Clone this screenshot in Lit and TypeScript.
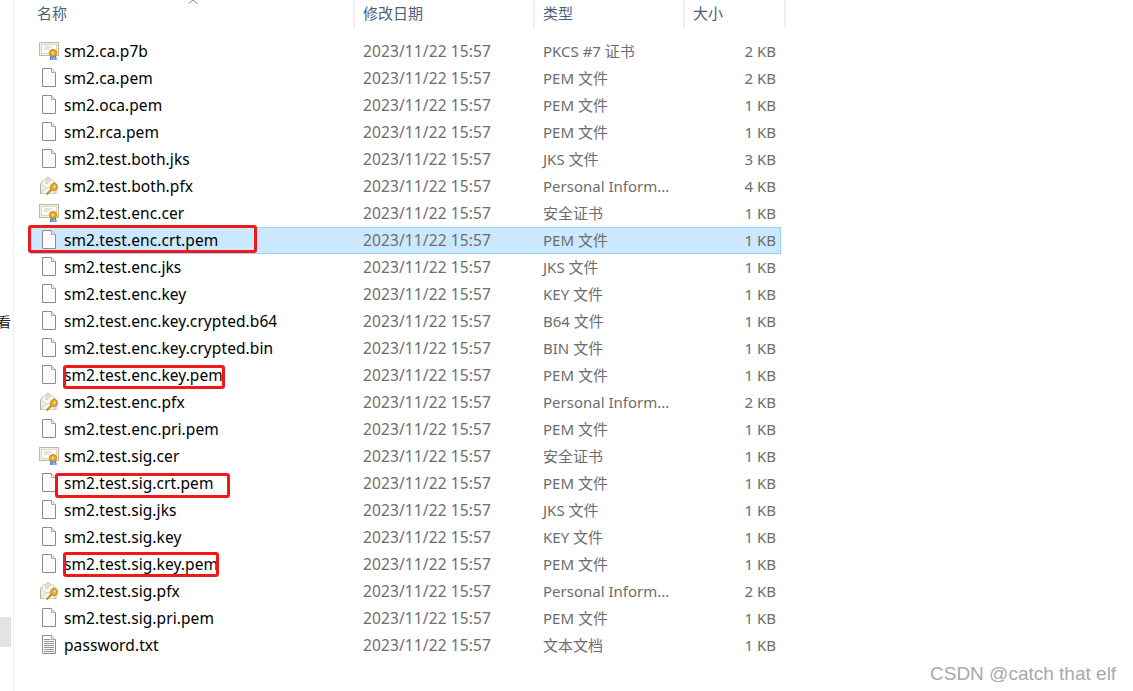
import { LitElement, html, css, svg } from "lit";
import { customElement } from "lit/decorators.js";

type Kind = "cert" | "doc" | "pfx" | "txt";
interface Row { n: string; t: string; s: string; k: Kind; sel?: boolean }

const PEM = "PEM 文件", JKS = "JKS 文件", KEY = "KEY 文件", PI = "Personal Inform...", SEC = "安全证书";
const rows: Row[] = [
  { n: "sm2.ca.p7b", t: "PKCS #7 证书", s: "2 KB", k: "cert" },
  { n: "sm2.ca.pem", t: PEM, s: "2 KB", k: "doc" },
  { n: "sm2.oca.pem", t: PEM, s: "1 KB", k: "doc" },
  { n: "sm2.rca.pem", t: PEM, s: "1 KB", k: "doc" },
  { n: "sm2.test.both.jks", t: JKS, s: "3 KB", k: "doc" },
  { n: "sm2.test.both.pfx", t: PI, s: "4 KB", k: "pfx" },
  { n: "sm2.test.enc.cer", t: SEC, s: "1 KB", k: "cert" },
  { n: "sm2.test.enc.crt.pem", t: PEM, s: "1 KB", k: "doc", sel: true },
  { n: "sm2.test.enc.jks", t: JKS, s: "1 KB", k: "doc" },
  { n: "sm2.test.enc.key", t: KEY, s: "1 KB", k: "doc" },
  { n: "sm2.test.enc.key.crypted.b64", t: "B64 文件", s: "1 KB", k: "doc" },
  { n: "sm2.test.enc.key.crypted.bin", t: "BIN 文件", s: "1 KB", k: "doc" },
  { n: "sm2.test.enc.key.pem", t: PEM, s: "1 KB", k: "doc" },
  { n: "sm2.test.enc.pfx", t: PI, s: "2 KB", k: "pfx" },
  { n: "sm2.test.enc.pri.pem", t: PEM, s: "1 KB", k: "doc" },
  { n: "sm2.test.sig.cer", t: SEC, s: "1 KB", k: "cert" },
  { n: "sm2.test.sig.crt.pem", t: PEM, s: "1 KB", k: "doc" },
  { n: "sm2.test.sig.jks", t: JKS, s: "1 KB", k: "doc" },
  { n: "sm2.test.sig.key", t: KEY, s: "1 KB", k: "doc" },
  { n: "sm2.test.sig.key.pem", t: PEM, s: "1 KB", k: "doc" },
  { n: "sm2.test.sig.pfx", t: PI, s: "2 KB", k: "pfx" },
  { n: "sm2.test.sig.pri.pem", t: PEM, s: "1 KB", k: "doc" },
  { n: "password.txt", t: "文本文档", s: "1 KB", k: "txt" },
];

const marks = [
  { x: 28, y: 224.5, w: 229, h: 28 },
  { x: 63, y: 364.5, w: 162, h: 24 },
  { x: 54.5, y: 472.5, w: 175, h: 25 },
  { x: 63, y: 551.5, w: 156, h: 25 },
];

const docShape = svg`<path d="M4.5 .5H13.5L17.5 4.5V18.5H4.5Z" fill="#fbfbfc" stroke="#8c8c8c"/><path d="M13.5 .5V4.5H17.5" fill="#e9ebee" stroke="#a8a8a8"/>`;

function icon(k: Kind) {
  let body;
  if (k === "doc") body = docShape;
  else if (k === "txt")
    body = svg`${docShape}<path d="M6 4.5H12.5M6 6.5H16M6 8.5H16M6 10.5H16M6 12.5H16M6 14.5H16M6 16.5H16" stroke="#8e9297" stroke-width="1"/>`;
  else if (k === "cert")
    body = svg`<rect x="1.5" y="1.5" width="19" height="13" fill="#f6f1e6" stroke="#c2b8a2"/>
      <rect x="3.5" y="3.5" width="15" height="9" fill="#fdfcf8" stroke="#ded6c4"/>
      <path d="M6 6H14M5.5 8H11" stroke="#d2cbbb"/>
      <path d="M13 14.5L12.5 19M14.2 15V19M16 15V19M17.5 14.5L18 19" stroke="#3d78d8" stroke-width="1.2"/>
      <circle cx="15" cy="12" r="3.6" fill="#eaa520" stroke="#c07e10" stroke-width=".8"/>
      <circle cx="15" cy="12" r="1.4" fill="#f7d774"/>`;
  else
    body = svg`<path d="M2.5 7.5L10 1.5L18 7.5V17.5H2.5Z" fill="#f1eee8" stroke="#b7b1a6"/>
      <path d="M4.5 9V4H15.5V9L10 12.5Z" fill="#fdfcf7" stroke="#d6d0c2" stroke-width=".8"/>
      <path d="M7 6L12 5M7 8L11 7" stroke="#d9b87a" stroke-width=".8"/>
      <path d="M2.5 17.5L9 11.5H11L18 17.5" fill="#f8f6f1" stroke="#c8c3b8" stroke-width=".8"/>
      <path d="M8.5 18.5L13.5 13.5" stroke="#c98f1e" stroke-width="2"/>
      <circle cx="16" cy="11" r="3.6" fill="#e6ac3a" stroke="#b9821c" stroke-width=".8"/>
      <circle cx="16.6" cy="10.4" r="1" fill="#fbeab8"/>`;
  return html`<svg class="ico" width="22" height="20" viewBox="0 0 22 20" aria-hidden="true">${body}</svg>`;
}

@customElement("app-root")
export class AppRoot extends LitElement {
  static styles = css`
    :host {
      display: block;
      position: relative;
      width: 1133px;
      height: 691px;
      overflow: hidden;
      background: #fff;
      font-family: "Noto Sans", "Noto Sans CJK SC", sans-serif;
      font-size: 15px;
    }
    .page { display: flex; height: 691px; }
    .side {
      width: 13px;
      flex: none;
      border-right: 1px solid #f0f0f0;
      display: flex;
      flex-direction: column;
      overflow: hidden;
    }
    .clip {
      margin-top: 313px;
      margin-left: -3px;
      height: 18px;
      line-height: 18px;
      font-size: 14px;
      color: #222;
    }
    .thumb { margin-top: 286px; width: 11px; height: 30px; background: #e3e3e3; }
    .list { margin-left: 16px; width: 751px; }
    .head, .row {
      display: grid;
      grid-template-columns: 325px 180px 150px 96px;
    }
    .head { height: 28px; margin-bottom: 10px; }
    .hc {
      box-sizing: border-box;
      padding-left: 8px;
      height: 28px;
      line-height: 26px;
      font-size: 15px;
      color: #4c607a;
      border-right: 2px solid #eeeeee;
    }
    .hc.first { padding-left: 7px; }
    .hc.last { margin-right: -5px; }
    .row { height: 27px; line-height: 27px; box-sizing: border-box; color: #6d6d6d; }
    .row.sel { background: #cce8ff; outline: 1px solid #99d1ff; outline-offset: -1px; }
    .name {
      display: flex;
      align-items: center;
      color: #000;
      padding-left: 8px;
      font-size: 15.5px;
      letter-spacing: .08px;
    }
    .ico { flex: none; margin: -2px 4px 0 0; }
    .date { padding-left: 8px; font-size: 15.5px; letter-spacing: .12px; }
    .type { padding-left: 8px; }
    .size { text-align: right; padding-right: 5px; }
    .mark {
      position: absolute;
      box-sizing: border-box;
      border: 3px solid #f01818;
      border-radius: 3px;
      pointer-events: none;
    }
    .caret { position: absolute; left: 188px; top: 0; }
    .wm {
      position: absolute;
      left: 930px;
      top: 662px;
      font-family: "Liberation Sans", Arial, sans-serif;
      font-size: 19px;
      line-height: 24px;
      color: #a9a9a9;
      white-space: nowrap;
    }
  `;

  render() {
    return html`
      <div class="page">
        <div class="side">
          <div class="clip">看</div>
          <div class="thumb"></div>
        </div>
        <div class="list">
          <div class="head">
            <div class="hc first">名称</div>
            <div class="hc">修改日期</div>
            <div class="hc">类型</div>
            <div class="hc last">大小</div>
          </div>
          ${rows.map(
            (r) => html`
              <div class="row ${r.sel ? "sel" : ""}">
                <div class="name">${icon(r.k)}<span>${r.n}</span></div>
                <div class="date">2023/11/22 15:57</div>
                <div class="type">${r.t}</div>
                <div class="size">${r.s}</div>
              </div>
            `
          )}
        </div>
      </div>
      <svg class="caret" width="10" height="4" viewBox="0 0 10 4" aria-hidden="true">
        <path d="M.5 3.5L5 0L9.5 3.5" fill="none" stroke="#8a8a8a"/>
      </svg>
      ${marks.map(
        (m) => html`<div class="mark" style="left:${m.x}px;top:${m.y}px;width:${m.w}px;height:${m.h}px"></div>`
      )}
      <div class="wm">CSDN @catch that elf</div>
    `;
  }
}
